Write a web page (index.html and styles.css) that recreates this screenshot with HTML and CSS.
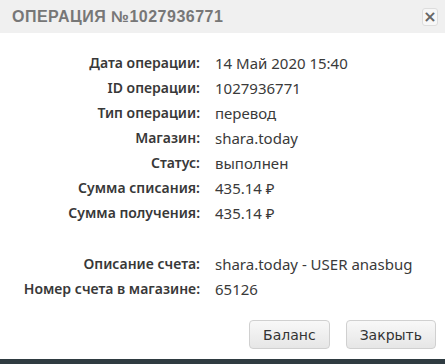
FILE: index.html
```html
<!DOCTYPE html>
<html lang="ru">
<head>
    <meta charset="UTF-8">
    <title>Операция №1027936771</title>
    <link rel="stylesheet" href="styles.css">
</head>
<body>
    <div class="modal">
        <div class="modal-header">
            <h2 class="modal-title">Операция №1027936771</h2>
            <button class="close-btn" type="button">&times;</button>
        </div>

        <div class="modal-body">
            <div class="info-row"><span class="info-label">Дата операции:</span><span class="info-value">14 Май 2020 15:40</span></div>
            <div class="info-row"><span class="info-label">ID операции:</span><span class="info-value">1027936771</span></div>
            <div class="info-row"><span class="info-label">Тип операции:</span><span class="info-value">перевод</span></div>
            <div class="info-row"><span class="info-label">Магазин:</span><span class="info-value">shara.today</span></div>
            <div class="info-row"><span class="info-label">Статус:</span><span class="info-value">выполнен</span></div>
            <div class="info-row"><span class="info-label">Сумма списания:</span><span class="info-value">435.14 &#8381;</span></div>
            <div class="info-row"><span class="info-label">Сумма получения:</span><span class="info-value">435.14 &#8381;</span></div>
            <div class="info-row spacer"></div>
            <div class="info-row"><span class="info-label">Описание счета:</span><span class="info-value">shara.today - USER anasbug</span></div>
            <div class="info-row"><span class="info-label">Номер счета в магазине:</span><span class="info-value">65126</span></div>
        </div>

        <div class="modal-footer">
            <button class="btn" type="button">Баланс</button>
            <button class="btn" type="button">Закрыть</button>
        </div>
    </div>
    <div class="page-bar"></div>
</body>
</html>
```

FILE: styles.css
```css
/* Окно операции */

body {
    margin: 0;
    background-color: #fff;
    font-family: "Noto Sans", Arial, sans-serif;
    color: #333;
    height: 364px;
    display: flex;
    flex-direction: column;
}

.modal {
    flex: 1;
    display: flex;
    flex-direction: column;
}

.modal-header {
    display: flex;
    align-items: center;
    justify-content: space-between;
    height: 33px;
    padding: 0 7px 0 12px;
    background-color: #f0f0f0;
}

.modal-title {
    margin: 0;
    font-family: "Liberation Sans", Arial, sans-serif;
    font-size: 16px;
    font-weight: bold;
    text-transform: uppercase;
    color: #777;
    letter-spacing: 0.5px;
}

.close-btn {
    width: 16px;
    height: 18px;
    padding: 0;
    border: 1px solid #ddd;
    border-radius: 3px;
    background-color: #f7f7f7;
    color: #666;
    font-family: "DejaVu Sans", sans-serif;
    font-size: 16px;
    font-weight: bold;
    line-height: 14px;
}

.modal-body {
    padding-top: 17px;
}

.info-row {
    display: flex;
    height: 25px;
    align-items: center;
    font-size: 15px;
}

.info-row.spacer {
    height: 26px;
}

.info-label {
    width: 215px;
    text-align: right;
    padding-right: 15px;
    box-sizing: border-box;
    font-size: 14px;
    font-weight: 600;
    color: #383838;
}

.info-value {
    color: #3a3a3a;
}

.modal-footer {
    margin-top: auto;
    display: flex;
    justify-content: flex-end;
    gap: 16px;
    padding: 0 9px 10px 0;
}

.btn {
    height: 29px;
    padding: 0 13px;
    border: 1px solid #d0d0d0;
    border-radius: 4px;
    background: linear-gradient(#f8f8f8, #e6e6e6);
    color: #333;
    font-family: "DejaVu Sans", Verdana, sans-serif;
    font-size: 14px;
}

.page-bar {
    height: 5px;
    background-color: #2f3b41;
}
```
